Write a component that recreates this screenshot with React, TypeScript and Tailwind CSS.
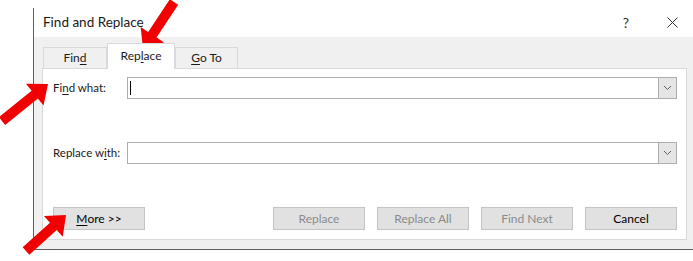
import React from 'react';

const font = { fontFamily: 'Lato, "Noto Sans", sans-serif' };

type Pt = [number, number];

// builds a block arrow polygon from tail to tip
const arrowPoints = (tail: Pt, tip: Pt, shaft: number, head: number, headLen: number) => {
  const dx = tip[0] - tail[0];
  const dy = tip[1] - tail[1];
  const len = Math.hypot(dx, dy);
  const ux = dx / len;
  const uy = dy / len;
  const px = -uy;
  const py = ux;
  const bx = tip[0] - ux * headLen;
  const by = tip[1] - uy * headLen;
  const pts: Pt[] = [
    [tail[0] + px * shaft / 2, tail[1] + py * shaft / 2],
    [bx + px * shaft / 2, by + py * shaft / 2],
    [bx + px * head / 2, by + py * head / 2],
    tip,
    [bx - px * head / 2, by - py * head / 2],
    [bx - px * shaft / 2, by - py * shaft / 2],
    [tail[0] - px * shaft / 2, tail[1] - py * shaft / 2],
  ];
  return pts.map((p) => p.join(',')).join(' ');
};

const Chevron: React.FC = () => (
  <div className="flex h-full w-[18px] items-center justify-center border-l border-[#adadad] bg-[#e5e5e5]">
    <svg width="9" height="6" viewBox="0 0 9 6">
      <path d="M1 1 L4.5 4.5 L8 1" fill="none" stroke="#606060" strokeWidth="1" />
    </svg>
  </div>
);

const ComboField: React.FC<{ caret?: boolean }> = ({ caret }) => (
  <div className="flex h-[22px] w-[551px] border border-[#adadad] bg-white">
    <div className="flex flex-1 items-center pl-[2px]">
      {caret && <div className="h-[14px] w-px bg-black" />}
    </div>
    <Chevron />
  </div>
);

const DlgButton: React.FC<{ children: React.ReactNode; disabled?: boolean }> = ({ children, disabled }) => (
  <button
    type="button"
    className={`flex h-[23px] w-[92px] items-center justify-center border border-[#c4c4c4] bg-[#e1e1e1] text-[12px] ${
      disabled ? 'text-[#8b8b8b]' : 'text-black'
    }`}
  >
    {children}
  </button>
);

const App: React.FC = () => {
  return (
    <div className="relative h-[261px] w-[693px] overflow-hidden bg-white text-[#1a1a1a]" style={font}>
      <div className="ml-[33px] mt-[8px] flex h-[242px] w-[660px] flex-col border-b border-l border-[#5f5f5f]">
        {/* title bar */}
        <div className="flex h-[29px] items-center bg-white pl-[9px] pr-[15px]">
          <span className="text-[13.5px] leading-none">Find and Replace</span>
          <span className="ml-auto text-[14px] leading-none text-[#333]">?</span>
          <svg className="ml-[38px]" width="11" height="11" viewBox="0 0 11 11">
            <path d="M0.5 0.5 L10.5 10.5 M10.5 0.5 L0.5 10.5" stroke="#333" strokeWidth="1" />
          </svg>
        </div>

        {/* body */}
        <div className="flex flex-1 flex-col bg-[#f0f0f0] pb-[9px] pl-[8px] pr-[6px] pt-[6px]">
          <div className="flex h-[25px] items-end pl-px text-[12px]">
            <div className="flex h-[21px] w-[64px] items-center justify-center border border-b-0 border-[#d9d9d9] bg-[#f0f0f0]">
              Fin<span className="underline underline-offset-2">d</span>
            </div>
            <div className="relative z-10 -mb-px flex h-[26px] w-[68px] items-center justify-center border border-b-0 border-[#d9d9d9] bg-white pb-[2px]">
              Rep<span className="underline underline-offset-2">l</span>ace
            </div>
            <div className="flex h-[21px] w-[63px] items-center justify-center border border-b-0 border-[#d9d9d9] bg-[#f0f0f0]">
              <span className="underline underline-offset-2">G</span>o To
            </div>
          </div>

          <div className="flex flex-1 flex-col border border-[#d9d9d9] bg-white pb-[9px] pl-[10px] pr-[9px] pt-[8px] text-[11.5px]">
            <div className="flex items-center">
              <span className="w-[74px] whitespace-nowrap">
                Fi<span className="underline underline-offset-2">n</span>d what:
              </span>
              <ComboField caret />
            </div>
            <div className="mt-[43px] flex items-center">
              <span className="w-[74px] whitespace-nowrap">
                Replace w<span className="underline underline-offset-2">i</span>th:
              </span>
              <ComboField />
            </div>
            <div className="mt-auto flex items-center">
              <DlgButton>
                <span className="underline underline-offset-2">M</span>ore &gt;&gt;
              </DlgButton>
              <div className="ml-auto flex gap-[12px]">
                <DlgButton disabled>Replace</DlgButton>
                <DlgButton disabled>Replace All</DlgButton>
                <DlgButton disabled>Find Next</DlgButton>
                <DlgButton>Cancel</DlgButton>
              </div>
            </div>
          </div>
        </div>
      </div>

      {/* red annotation arrows */}
      <svg className="pointer-events-none absolute left-0 top-0" width="693" height="261" viewBox="0 0 693 261">
        <polygon points={arrowPoints([174, 2], [143, 49], 10, 28, 17)} fill="#f00000" />
        <polygon points={arrowPoints([2, 121], [48, 84], 10, 28, 17)} fill="#f00000" />
        <polygon points={arrowPoints([26, 251], [66, 215], 10, 28, 17)} fill="#f00000" />
      </svg>
    </div>
  );
};

export default App;
